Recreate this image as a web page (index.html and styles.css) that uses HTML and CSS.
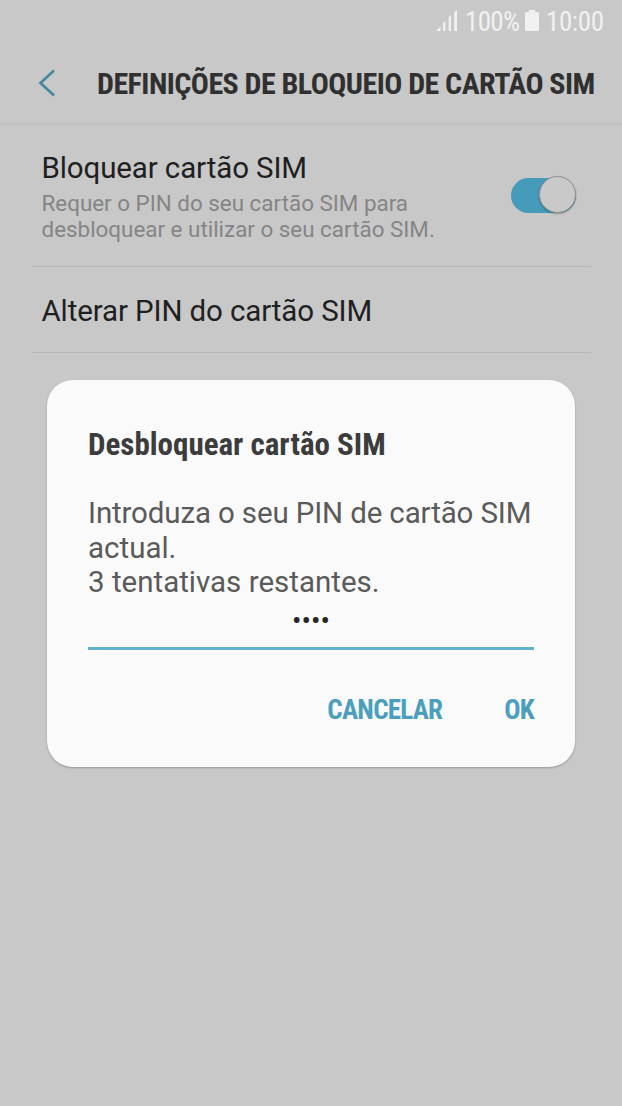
FILE: index.html
```html
<!DOCTYPE html>
<html lang="pt">
    <head>
        <meta charset="UTF-8" />
        <meta name="viewport" content="width=device-width, initial-scale=1.0" />
        <title>Definições de bloqueio de cartão SIM</title>
        <link rel="stylesheet" href="styles.css">
    </head>
    <body>
        <div class="status-bar">
            <svg class="signal" width="22" height="22" viewBox="0 0 22 22">
                <path d="M0 22L4.5 17.5V22zM7 22V14L9.3 11.7V22zM12.6 22V8.5L15 6V22zM18.2 22V3.5L21 .7V22z" />
            </svg>
            <span class="level">100%</span>
            <svg class="battery" width="14" height="21" viewBox="0 0 14 21">
                <path d="M1 2.2H3.8V0H10.2V2.2H13a1 1 0 0 1 1 1V20a1 1 0 0 1-1 1H1a1 1 0 0 1-1-1V3.2a1 1 0 0 1 1-1z" />
            </svg>
            <span class="clock">10:00</span>
        </div>
        <header class="header">
            <svg class="back" width="18" height="28" viewBox="0 0 18 28">
                <path d="M16 1.5L2.5 14L16 26.5" />
            </svg>
            <h1>DEFINIÇÕES DE BLOQUEIO DE CARTÃO SIM</h1>
        </header>
        <ul class="settings">
            <li class="lock">
                <div>
                    <h2>Bloquear cartão SIM</h2>
                    <p>Requer o PIN do seu cartão SIM para<br>desbloquear e utilizar o seu cartão SIM.</p>
                </div>
                <span class="switch"><i></i></span>
            </li>
            <li class="change">
                <h2>Alterar PIN do cartão SIM</h2>
            </li>
        </ul>
        <div class="dialog">
            <h3>Desbloquear cartão SIM</h3>
            <p>Introduza o seu PIN de cartão SIM<br>actual.<br>3 tentativas restantes.</p>
            <div class="pin">••••</div>
            <div class="actions">
                <button class="cancel">CANCELAR</button>
                <button class="ok">OK</button>
            </div>
        </div>
    </body>
</html>
```

FILE: styles.css
```css
* {
    box-sizing: border-box;
    margin: 0;
    padding: 0;
}
body {
    height: 1106px;
    overflow: hidden;
    background: #c8c8c8;
    font-family: Roboto, sans-serif;
}
.status-bar,
.header h1,
.dialog h3,
.actions button {
    font-family: "Roboto Condensed", Roboto, sans-serif;
    font-stretch: 75%;
    white-space: nowrap;
}
.status-bar {
    display: flex;
    height: 42px;
    padding: 0 0 0 436px;
    align-items: center;
    font-size: 27px;
    color: #f1f1f1;
}
.status-bar svg {
    fill: #f1f1f1;
    flex: none;
}
.signal {
    margin-bottom: 2px;
}
.level {
    width: 60px;
    margin-left: 7px;
    padding-top: 2px;
    letter-spacing: -0.7px;
}
.battery {
    margin-bottom: 1px;
}
.clock {
    margin-left: 7px;
    padding-top: 2px;
    letter-spacing: -0.4px;
}
.header {
    display: flex;
    height: 83px;
    padding-left: 38px;
    align-items: center;
    border-bottom: 2px solid #c2c2c2;
}
.back {
    flex: none;
    fill: none;
    stroke: #4387a0;
    stroke-width: 2.6;
}
.header h1 {
    margin-left: 41px;
    padding-top: 2px;
    font-size: 30px;
    font-weight: 700;
    letter-spacing: -0.54px;
    color: #303030;
}
.settings {
    list-style: none;
    padding: 0 31px 0 32px;
}
.settings li {
    display: flex;
    padding: 0 15px 0 9.5px;
    justify-content: space-between;
    border-bottom: 1px solid #b7b7b7;
}
.settings h2 {
    font-size: 29.5px;
    font-weight: 400;
    line-height: 36px;
    letter-spacing: -0.12px;
    color: #1f1f1f;
}
.settings p {
    margin-top: 4px;
    font-size: 22.4px;
    line-height: 26px;
    color: #858585;
}
.settings .lock {
    height: 142px;
    padding-top: 25px;
}
.settings .change {
    height: 86px;
    padding-top: 2px;
    align-items: center;
}
.switch {
    width: 65px;
    height: 35px;
    margin-top: 28px;
    border-radius: 18px;
    background: #459bba;
    display: flex;
    align-items: center;
    justify-content: flex-end;
}
.switch i {
    width: 37px;
    height: 37px;
    flex: none;
    margin-bottom: 2px;
    border: 1px solid #929292;
    border-radius: 50%;
    background: #c9c9c9;
    box-shadow: 0 1px 2px rgba(0, 0, 0, 0.3);
}
.dialog {
    width: 528px;
    height: 387px;
    margin: 27px 0 0 47px;
    padding: 47px 41px 0;
    border-radius: 26px;
    background: #fafafa;
    box-shadow: 0 1px 2px rgba(0, 0, 0, 0.25);
}
.dialog h3 {
    font-size: 31px;
    line-height: 36px;
    font-weight: 700;
    color: #3c3c3c;
}
.dialog p {
    margin-top: 33px;
    font-size: 29.5px;
    line-height: 34.6px;
    color: #5a5a5a;
    white-space: nowrap;
}
.dialog p::first-line {
    letter-spacing: -0.14px;
}
.pin {
    height: 50px;
    border-bottom: 3px solid #60b0ce;
    text-align: center;
    font-size: 28px;
    line-height: 42px;
    color: #252525;
}
.actions {
    display: flex;
    margin-top: 43px;
    justify-content: flex-end;
}
.actions button {
    border: none;
    background: none;
    font-size: 27px;
    line-height: 34px;
    font-weight: 700;
    letter-spacing: -0.75px;
    color: #4b9fbd;
}
.actions .ok {
    margin-left: 62px;
}
```
